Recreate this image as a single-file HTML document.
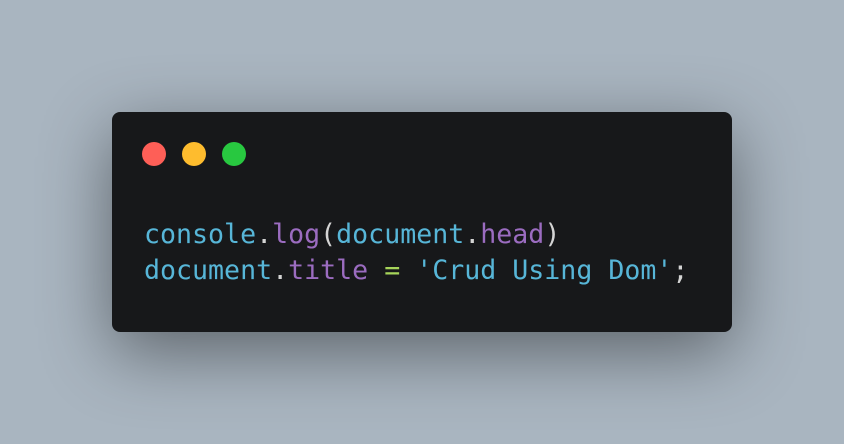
<!DOCTYPE html>
<html><head><style>
html,body{margin:0;width:844px;height:444px;overflow:hidden;background:#a9b5c0;}
.win{position:absolute;left:112px;top:112px;width:620px;height:220px;background:#17181a;border-radius:8px;box-shadow:0 20px 70px rgba(0,0,0,0.45);}
.d{position:absolute;top:30px;width:24px;height:24px;border-radius:50%;}
pre{position:absolute;left:32px;top:105px;margin:0;font-family:"DejaVu Sans Mono","Liberation Mono",monospace;font-size:26.6px;line-height:36px;color:#57b6d8;}
.p{color:#9b6cc0}.w{color:#d4d4d4}.g{color:#a6d45a}
</style></head><body>
<div class="win">
<div class="d" style="left:30px;background:#fe5f57"></div>
<div class="d" style="left:70px;background:#febc2e"></div>
<div class="d" style="left:110px;background:#28c840"></div>
<pre>console<span class="w">.</span><span class="p">log</span><span class="w">(</span>document<span class="w">.</span><span class="p">head</span><span class="w">)</span>
document<span class="w">.</span><span class="p">title</span> <span class="g">=</span> 'Crud Using Dom'<span class="w">;</span></pre>
</div>
</body></html>
